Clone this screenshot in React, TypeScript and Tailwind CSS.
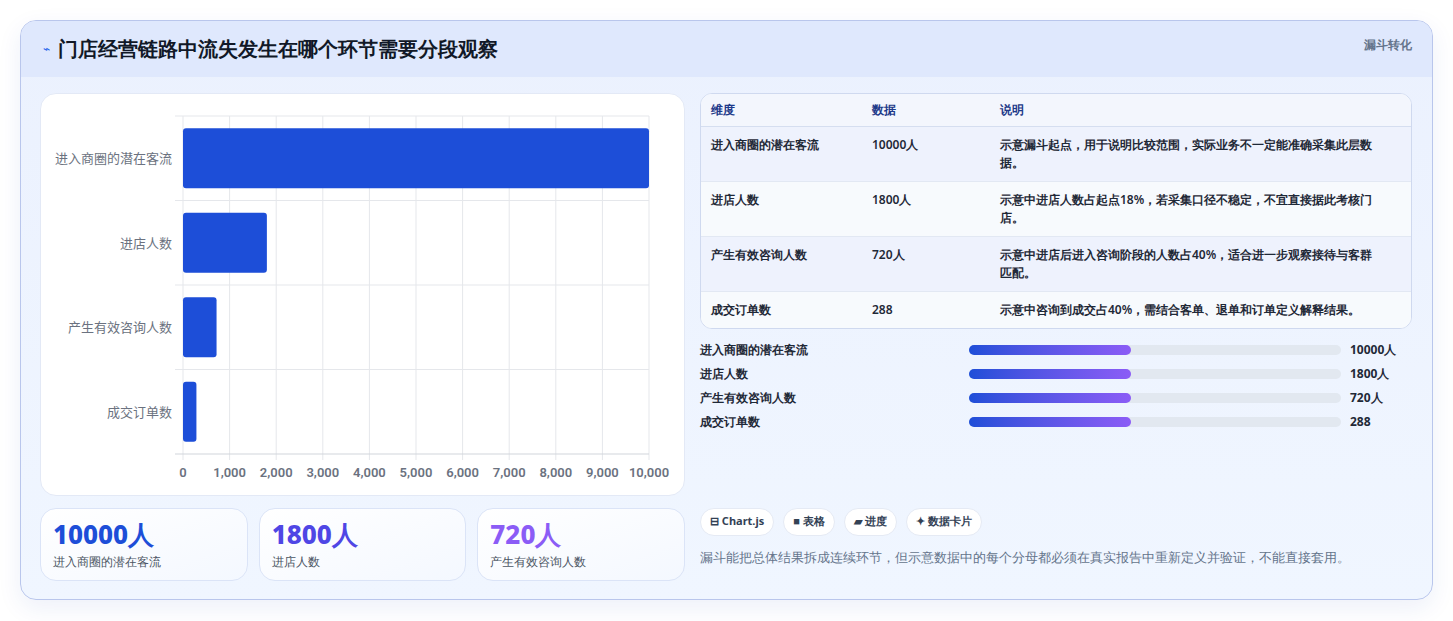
const rows = [
  { name: '进入商圈的潜在客流', value: 10000, data: '10000人', note: '示意漏斗起点，用于说明比较范围，实际业务不一定能准确采集此层数据。' },
  { name: '进店人数', value: 1800, data: '1800人', note: '示意中进店人数占起点18%，若采集口径不稳定，不宜直接据此考核门店。' },
  { name: '产生有效咨询人数', value: 720, data: '720人', note: '示意中进店后进入咨询阶段的人数占40%，适合进一步观察接待与客群匹配。' },
  { name: '成交订单数', value: 288, data: '288', note: '示意中咨询到成交占40%，需结合客单、退单和订单定义解释结果。' },
]

function Chart() {
  // card local coords: plot x 143..609, y 23..361
  const x0 = 142
  const x1 = 608
  const top = 22
  const bottom = 360
  const rowH = (bottom - top) / 4
  const scale = (v: number) => ((x1 - x0) * v) / 10000
  return (
    <svg width="644" height="402" className="block">
      {Array.from({ length: 11 }).map((_, i) => {
        const x = x0 + ((x1 - x0) * i) / 10
        return (
          <g key={i}>
            <line x1={x} x2={x} y1={top} y2={bottom + 6} stroke="#e5e7eb" />
            <text x={x} y={383} textAnchor="middle" fontSize="13" fontWeight="600" fill="#6b7280" fontFamily="Roboto, 'Liberation Sans', sans-serif">
              {(i * 1000).toLocaleString('en-US')}
            </text>
          </g>
        )
      })}
      {Array.from({ length: 5 }).map((_, i) => (
        <line key={i} x1={x0 - 8} x2={x1} y1={top + rowH * i} y2={top + rowH * i} stroke={i === 4 ? '#d1d5db' : '#e5e7eb'} />
      ))}
      {rows.map((r, i) => {
        const cy = top + rowH * i + rowH / 2
        return (
          <g key={r.name}>
            <rect x={x0} y={cy - 30} width={scale(r.value)} height={60} rx={3} fill="#1d4ed8" />
            <text x={x0 - 11} y={cy + 5} textAnchor="end" fontSize="13" fill="#6b7280" fontFamily="'Noto Sans CJK SC', sans-serif">
              {r.name}
            </text>
          </g>
        )
      })}
    </svg>
  )
}

export default function App() {
  const kpis = [
    { v: '10000人', l: '进入商圈的潜在客流', c: 'text-[#1d4ed8]' },
    { v: '1800人', l: '进店人数', c: 'text-[#4f46e5]' },
    { v: '720人', l: '产生有效咨询人数', c: 'text-[#8b5cf6]' },
  ]
  return (
    <div className="w-[1453px] h-[621px] bg-white p-5 font-['Noto_Sans_CJK_SC',sans-serif]">
      <div className="h-[580px] w-[1413px] rounded-2xl border border-[#b9c6ec] bg-gradient-to-b from-[#ebf1fe] to-[#f0f6ff] overflow-hidden shadow-[0_8px_24px_rgba(30,64,175,0.08)]">
        <div className="h-[56px] bg-[#dfe8fd] flex items-start justify-between pl-[22px] pr-5">
          <div className="flex items-center gap-[8px] h-[56px]">
            <span className="text-[#2563eb] text-[12px]">⌁</span>
            <h1 className="text-[20px] font-bold text-[#111827]">门店经营链路中流失发生在哪个环节需要分段观察</h1>
          </div>
          <span className="mt-[15px] text-[12px] font-bold text-[#64748b]">漏斗转化</span>
        </div>
        <div className="flex gap-[15px] pl-[19px] pr-5 pt-4">
          <div className="w-[645px] flex flex-col gap-3">
            <div className="h-[403px] rounded-2xl bg-white border border-[#e3e9f6]">
              <Chart />
            </div>
            <div className="grid grid-cols-3 gap-[11px]">
              {kpis.map((k) => (
                <div key={k.v} className="h-[73px] rounded-2xl border border-[#dbe4f7] bg-gradient-to-br from-white to-[#f4f8ff] px-3 pt-2">
                  <div className={`text-[26px] leading-[34px] font-extrabold ${k.c}`}>{k.v}</div>
                  <div className="text-[12px] text-[#4b5563] font-medium mt-[2px]">{k.l}</div>
                </div>
              ))}
            </div>
          </div>
          <div className="w-[713px] flex flex-col">
            <div className="rounded-xl border border-[#cfd9ef] overflow-hidden bg-white">
              <table className="w-full text-[12px] border-collapse">
                <thead>
                  <tr className="h-[32px] bg-[#f3f6fd] text-[#1e3a8a] font-bold text-left border-b border-[#d5def0]">
                    <th className="pl-[10px] w-[171px]">维度</th>
                    <th className="w-[128px]">数据</th>
                    <th className="pr-[28px]">说明</th>
                  </tr>
                </thead>
                <tbody>
                  {rows.map((r, i) => (
                    <tr key={r.name} className={`${i % 2 === 0 ? 'bg-[#eef2fd]' : 'bg-[#f7fafd]'} border-b border-[#e2e8f3] last:border-0 align-top text-[#1f2937] font-semibold`}>
                      <td className="pl-[10px] py-[9px]">{r.name}</td>
                      <td className="py-[9px]">{r.data}</td>
                      <td className="py-[9px] pr-[28px] leading-[18px]">{r.note}</td>
                    </tr>
                  ))}
                </tbody>
              </table>
            </div>
            <div className="mt-[12px] flex flex-col gap-[5px]">
              {rows.map((r) => (
                <div key={r.name} className="flex items-center h-[19px] text-[12px] font-bold text-[#1f2937]">
                  <span className="w-[269px]">{r.name}</span>
                  <div className="w-[372px] h-[10px] rounded-full bg-[#e2e8f0]">
                    <div className="w-[162px] h-[10px] rounded-full bg-gradient-to-r from-[#1d4ed8] to-[#8b5cf6]" />
                  </div>
                  <span className="ml-[9px]">{r.data}</span>
                </div>
              ))}
            </div>
            <div className="mt-auto mb-[12px] flex gap-[9px]">
              {['⊟ Chart.js', '■ 表格', '▰ 进度', '✦ 数据卡片'].map((c) => (
                <span key={c} className="h-[28px] px-[9px] rounded-full bg-white border border-[#e5eaf4] text-[11px] font-bold text-[#334155] flex items-center">{c}</span>
              ))}
            </div>
            <p className="mb-[14px] text-[13px] font-medium text-[#64748b]">漏斗能把总体结果拆成连续环节，但示意数据中的每个分母都必须在真实报告中重新定义并验证，不能直接套用。</p>
          </div>
        </div>
      </div>
    </div>
  )
}
